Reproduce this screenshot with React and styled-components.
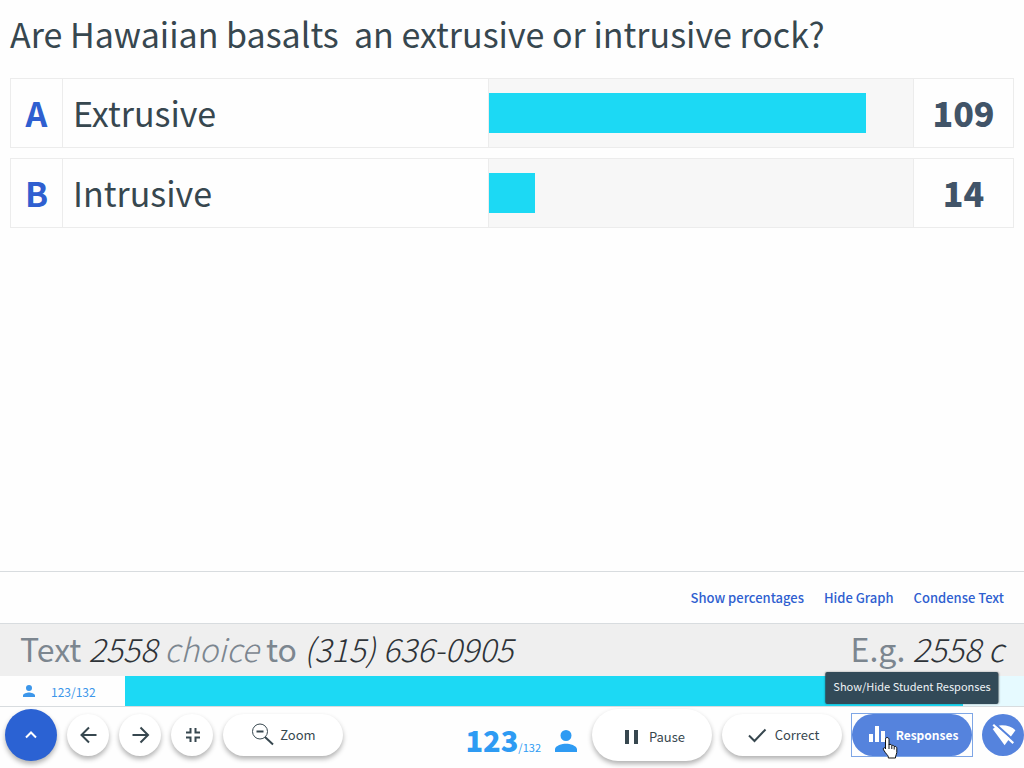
import React from 'react';
import styled, { createGlobalStyle, css } from 'styled-components';

const GlobalStyle = createGlobalStyle`
  *, *::before, *::after { box-sizing: border-box; }
  body {
    margin: 0;
    background: #fefefe;
    color: #37474f;
    font-family: 'Noto Sans CJK SC', 'Noto Sans', sans-serif;
  }
  button { font-family: inherit; }
`;

const Page = styled.div`
  display: flex;
  flex-direction: column;
  min-height: 100vh;
`;

const Poll = styled.main`
  flex: 1;
  padding: 10px 10px 0;
`;

const Question = styled.h1`
  margin: 0 0 10px;
  font-size: 34px;
  font-weight: 400;
  line-height: 48px;
  white-space: pre-wrap;
`;

const Results = styled.table`
  width: 100%;
  table-layout: fixed;
  border-collapse: separate;
  border-spacing: 0 10px;
  line-height: 48px;
`;

const cell = css`
  height: 70px;
  padding: 0;
  border: 1px solid #ececec;
  border-right-width: 0;
  vertical-align: middle;
`;

const Letter = styled.th`
  ${cell}
  color: #2f5fd0;
  font-size: 34px;
  font-weight: 700;
`;

const Choice = styled.td`
  ${cell}
  padding-left: 10px;
  font-size: 34px;
  font-weight: 400;
`;

const Graph = styled.td`
  ${cell}
  background: #f7f7f7;
`;

const Bar = styled.div`
  height: 40px;
  background: #1cd9f4;
`;

const Count = styled.td`
  ${cell}
  border-right-width: 1px;
  color: #415468;
  font-size: 34px;
  font-weight: 900;
  text-align: center;
`;

const Options = styled.nav`
  display: flex;
  align-items: center;
  justify-content: flex-end;
  gap: 20px;
  height: 53px;
  padding: 0 20px;
  border: 1px solid #d8dcdf;
  border-width: 1px 0;
`;

const Option = styled.a`
  color: #2f5fd0;
  font-size: 13px;
  font-weight: 500;
  line-height: 20px;
  text-decoration: none;
`;

const Instructions = styled.section`
  display: flex;
  align-items: center;
  justify-content: space-between;
  height: 52px;
  padding: 0 20px 4px;
  background: #efefef;
  color: #7c868f;
  font-size: 32px;
  font-weight: 400;
  line-height: 48px;
  white-space: nowrap;

  p { margin: 0; }
  em { font-weight: 300; }
`;

const Code = styled.em`
  color: #2e3338;
`;

const Participation = styled.section`
  display: flex;
  height: 31px;
  border-bottom: 1px solid #d8dcdf;
`;

const Joined = styled.div`
  display: flex;
  align-items: center;
  gap: 16px;
  width: 125px;
  padding-left: 23px;
  color: #3c96ea;
  font-size: 12px;
  font-weight: 400;
`;

const Track = styled.div`
  flex: 1;
  background: #e6faff;
`;

const TrackFill = styled.div`
  height: 100%;
  background: #1cd9f4;
`;

const Toolbar = styled.footer`
  display: flex;
  align-items: center;
  justify-content: space-between;
  height: 61px;
  padding-left: 5px;
  padding-bottom: 5px;
`;

const Group = styled.div`
  display: flex;
  align-items: center;
  gap: 10px;
`;

const tones = {
  plain: css`background: #fff; color: #37474f;`,
  primary: css`background: #2b62d3; color: #fff;`,
  soft: css`background: #5583dd; color: #fff;`,
};

const RoundButton = styled.button`
  display: flex;
  align-items: center;
  justify-content: center;
  width: ${(p) => (p.$large ? 52 : 42)}px;
  height: ${(p) => (p.$large ? 52 : 42)}px;
  padding: 0;
  border: 0;
  border-radius: 50%;
  box-shadow: ${(p) => (p.$tone === 'soft' ? 'none' : '0 3px 5px rgba(0, 0, 0, 0.3)')};
  ${(p) => tones[p.$tone || 'plain']}
`;

const PillButton = styled.button`
  display: flex;
  align-items: center;
  justify-content: center;
  gap: 6px;
  width: 120px;
  height: ${(p) => (p.$large ? 52 : 42)}px;
  padding: ${(p) => (p.$large ? '4px 0 0' : '0')};
  border: 0;
  border-radius: 26px;
  font-size: ${(p) => (p.$tone ? 12 : 13)}px;
  font-weight: ${(p) => (p.$tone ? 700 : 400)};
  line-height: 20px;
  box-shadow: ${(p) => (p.$tone === 'soft' ? 'none' : '0 3px 5px rgba(0, 0, 0, 0.3)')};
  ${(p) => tones[p.$tone || 'plain']}
`;

const Tally = styled.div`
  display: flex;
  align-items: center;
  gap: 14px;
  margin-right: 5px;
  padding-top: 12px;
  color: #2e9bf3;
`;

const TallyText = styled.span`
  padding-top: 4px;
  font-size: 11px;
  font-weight: 400;
  line-height: 36px;

  strong { font-size: 29px; font-weight: 900; }
`;

const FocusFrame = styled.div`
  position: relative;
  outline: 1px solid #7ea6e6;
`;

const Tooltip = styled.div`
  position: absolute;
  bottom: calc(100% + 10px);
  left: 50%;
  transform: translateX(-50%);
  padding: 4px 8px 8px;
  border-radius: 2px;
  background: #324a58;
  color: #eef3f6;
  font-size: 11px;
  line-height: 20px;
  white-space: nowrap;
  box-shadow: 0 0 2px rgba(0, 0, 0, 0.4);
`;

const Pointer = styled.svg`
  position: absolute;
  top: 22px;
  left: 30px;
`;

const PersonIcon = ({ size }) => (
  <svg width={size} height={size} viewBox="4 4 16 16" fill="currentColor" aria-hidden="true">
    <path d="M12 12a4 4 0 1 0 0-8 4 4 0 0 0 0 8zm0 2c-2.700 0-8 1.300-8 4v2h16v-2c0-2.700-5.300-4-8-4z" />
  </svg>
);

const Glyph = ({ size = 24, children }) => (
  <svg width={size} height={size} viewBox="0 0 24 24" fill="none" stroke="currentColor" strokeWidth="2" aria-hidden="true">
    {children}
  </svg>
);

const answers = [
  { letter: 'A', label: 'Extrusive', count: 109 },
  { letter: 'B', label: 'Intrusive', count: 14 },
];
const responded = 123;
const enrolled = 132;

export default function App() {
  return (
    <Page>
      <GlobalStyle />
      <Poll>
        <Question>{'Are Hawaiian basalts  an extrusive or intrusive rock?'}</Question>
        <Results>
          <colgroup>
            <col width="52" />
            <col />
            <col />
            <col width="101" />
          </colgroup>
          <tbody>
            {answers.map((a) => (
              <tr key={a.letter}>
                <Letter scope="row">{a.letter}</Letter>
                <Choice>{a.label}</Choice>
                <Graph>
                  <Bar style={{ width: `${Math.round((a.count / responded) * 100)}%` }} />
                </Graph>
                <Count>{a.count}</Count>
              </tr>
            ))}
          </tbody>
        </Results>
      </Poll>

      <Options>
        <Option href="#percentages">Show percentages</Option>
        <Option href="#graph">Hide Graph</Option>
        <Option href="#condense">Condense Text</Option>
      </Options>

      <Instructions>
        <p>Text <Code>2558</Code> <em>choice</em> to <Code>(315) 636-0905</Code></p>
        <p>E.g. <Code>2558 c</Code></p>
      </Instructions>

      <Participation>
        <Joined>
          <PersonIcon size={12} />
          <span>{responded}/{enrolled}</span>
        </Joined>
        <Track>
          <TrackFill style={{ width: `${(responded / enrolled) * 100}%` }} />
        </Track>
      </Participation>

      <Toolbar>
        <Group>
          <RoundButton $large $tone="primary" aria-label="Open menu">
            <Glyph><path d="M7 14.500l5-5 5 5" /></Glyph>
          </RoundButton>
          <RoundButton aria-label="Previous">
            <Glyph><path d="M20.500 12H6M13 4.500L5.500 12l7.500 7.500" /></Glyph>
          </RoundButton>
          <RoundButton aria-label="Next">
            <Glyph><path d="M4.500 12h15M12.500 4.500l7.500 7.500-7.500 7.500" /></Glyph>
          </RoundButton>
          <RoundButton aria-label="Exit full screen">
            <Glyph><path d="M6 9.500h4.500V5M15.500 5v4.500H20M6 14.500h4.500V19M20 14.500h-4.500V19" /></Glyph>
          </RoundButton>
          <PillButton>
            <Glyph>
              <circle cx="10" cy="8.500" r="7.500" strokeWidth="1" />
              <path d="M6.500 8.500h7" />
              <path d="M15 14l8 7.500" />
            </Glyph>
            Zoom
          </PillButton>
        </Group>
        <Group>
          <Tally>
            <TallyText><strong>{responded}</strong>/{enrolled}</TallyText>
            <PersonIcon size={22} />
          </Tally>
          <PillButton $large>
            <Glyph>
              <path d="M8 5v14M17 5v14" strokeWidth="4" />
            </Glyph>
            Pause
          </PillButton>
          <PillButton>
            <Glyph><path d="M4 12.500l5.500 5.500L20.500 6.500" /></Glyph>
            Correct
          </PillButton>
          <FocusFrame>
            <PillButton $tone="soft" aria-describedby="responses-tip">
              <Glyph>
                <path d="M5 11v8M11 3v16M17 8v11" strokeWidth="4" />
              </Glyph>
              Responses
            </PillButton>
            <Tooltip role="tooltip" id="responses-tip">Show/Hide Student Responses</Tooltip>
            <Pointer width="17" height="23" viewBox="0 0 17 23" aria-hidden="true">
              <path
                d="M5 1.500c1.200 0 2 .8 2 2v5l1-.2c1 0 1.600.4 1.800 1.200 1.200-.5 2.200 0 2.400 1 1.400-.5 2.600.2 2.600 1.700v4.300c0 1.800-1.300 3-1.300 4.500v1H6.300v-1.200c0-1.200-2.500-3-4.800-7-.8-1.500.7-2.700 2-1.600L3.500 13V3.500c0-1.200.5-2 1.500-2z"
                fill="#fff"
                stroke="#111"
                strokeWidth="1"
              />
              <path d="M7 8v5M9.800 9.500v3.500M12.200 10.500v3" stroke="#111" strokeWidth="1" />
            </Pointer>
          </FocusFrame>
          <RoundButton $tone="soft" aria-label="Go offline">
            <Glyph size={26}>
              <path
                d="M13.500 21.500L2.500 6.500C5 4.500 8 3 11 3c5 0 9.500 1.500 12.500 4.500z"
                fill="currentColor"
                stroke="none"
              />
              <path d="M4.500 1.500L23 18" stroke="#5583dd" />
              <path d="M3 2.500l18.500 17" />
            </Glyph>
          </RoundButton>
        </Group>
      </Toolbar>
    </Page>
  );
}
